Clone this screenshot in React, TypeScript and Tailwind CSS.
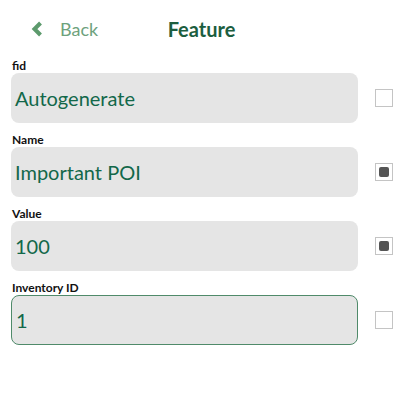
import React from "react";

const fields = [
  { label: "fid", value: "Autogenerate", checked: false, focused: false },
  { label: "Name", value: "Important POI", checked: true, focused: false },
  { label: "Value", value: "100", checked: true, focused: false },
  { label: "Inventory ID", value: "1", checked: false, focused: true },
];

function Checkbox({ checked }: { checked: boolean }) {
  return (
    <div className="w-[18px] h-[18px] border border-[#c4c4c4] flex items-center justify-center bg-white">
      {checked && <div className="w-[10px] h-[10px] rounded-[2px] bg-[#555555]" />}
    </div>
  );
}

export default function App() {
  return (
    <div className="w-[405px] h-[405px] bg-white font-['Lato','Noto_Sans',sans-serif]">
      {/* Header */}
      <div className="relative h-[58px] flex items-center justify-center">
        <div className="absolute left-[31px] top-[20px] flex items-center gap-[17px]">
          <svg width="12" height="16" viewBox="0 0 12 16">
            <polyline points="9.5,2 3.5,8 9.5,14" fill="none" stroke="#5c9a6c" strokeWidth="4" strokeLinecap="butt" strokeLinejoin="miter" />
          </svg>
          <span className="text-[18px] text-[#6ea27d] leading-none">Back</span>
        </div>
        <span className="text-[20px] font-bold text-[#1c5e3f] leading-none ml-[-2px]">Feature</span>
      </div>

      {/* Fields */}
      <div className="flex flex-col gap-[9px] pl-[11px]">
        {fields.map((f) => (
          <div key={f.label} className="flex flex-col">
            <span className="text-[12px] font-bold text-[#111111] leading-[15px] pl-px">{f.label}</span>
            <div className="flex items-center">
              <div
                className={`w-[347px] h-[50px] rounded-[8px] bg-[#e5e5e5] flex items-center pl-[4px] ${
                  f.focused ? "border border-[#4f8a6a]" : ""
                }`}
              >
                <span className="text-[20px] text-[#12684a] leading-none">{f.value}</span>
              </div>
              <div className="ml-[17px]">
                <Checkbox checked={f.checked} />
              </div>
            </div>
          </div>
        ))}
      </div>
    </div>
  );
}
